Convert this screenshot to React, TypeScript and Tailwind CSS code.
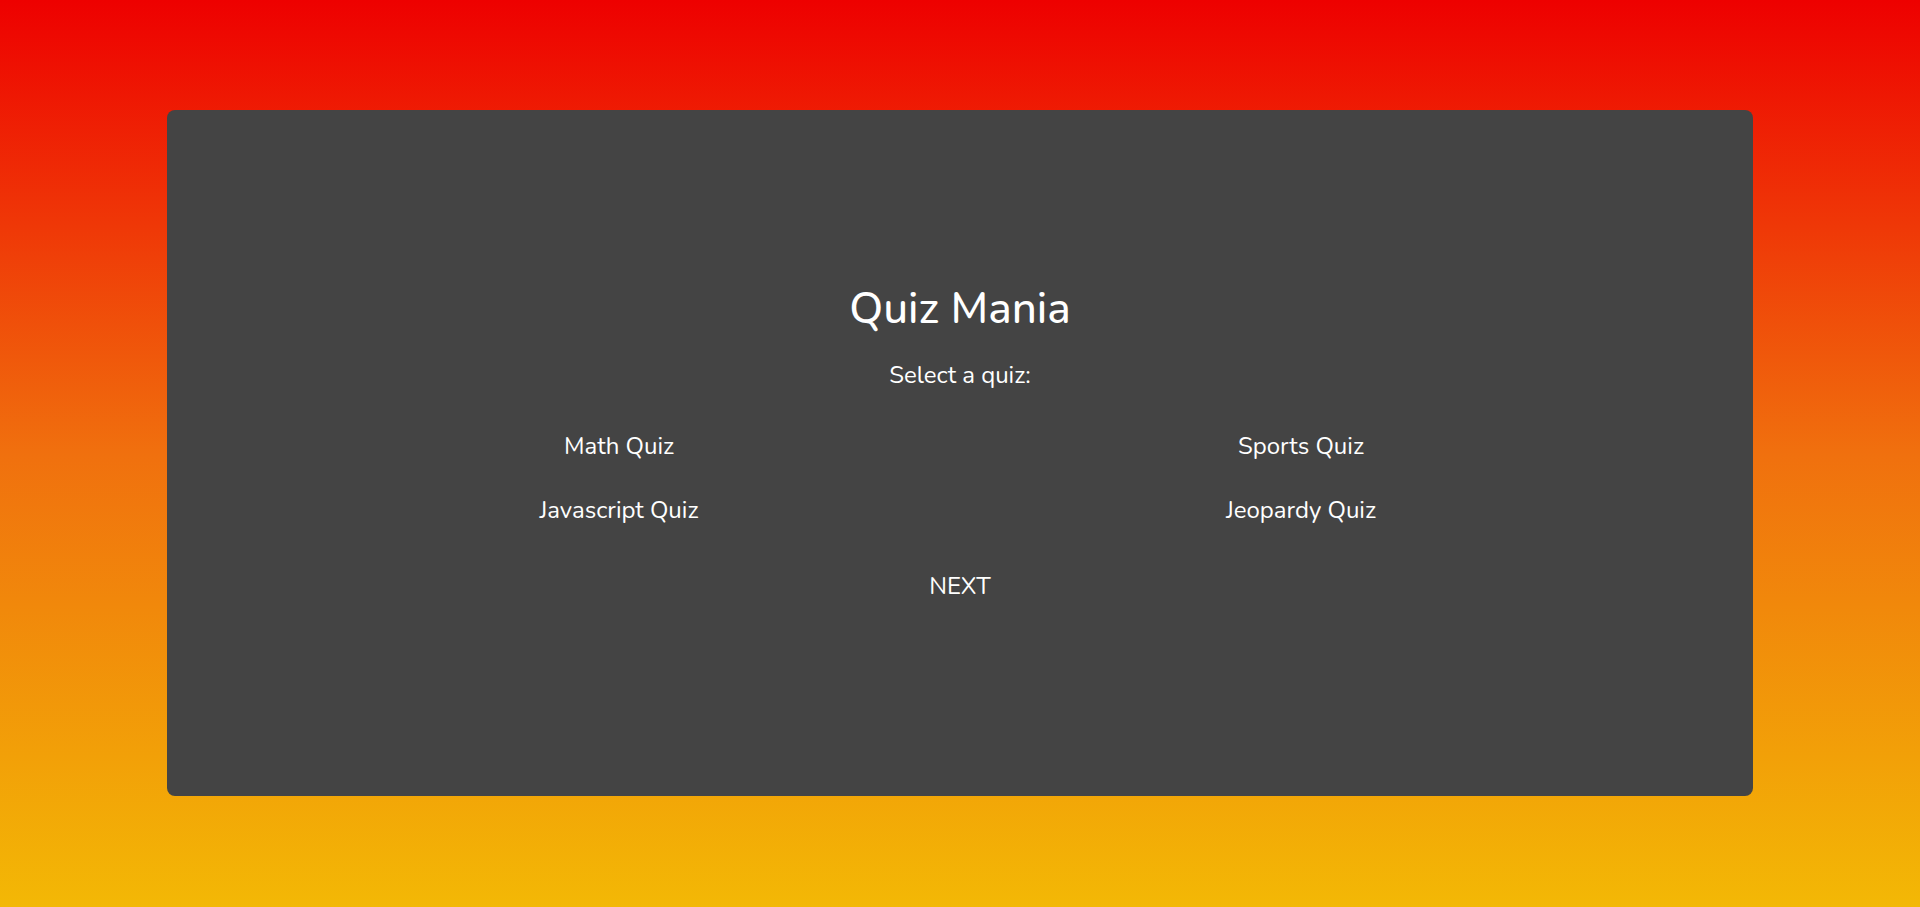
import { useState } from 'react';

const quizzes = ['Math Quiz', 'Sports Quiz', 'Javascript Quiz', 'Jeopardy Quiz'];

export default function App() {
  const [selected, setSelected] = useState<string | null>(null);

  return (
    <div
      className="min-h-screen w-full flex items-center justify-center bg-linear-to-b/srgb from-[#ee0000] via-[#f0700e] to-[#f3b805] pt-[110px] pb-[111px]"
      style={{ fontFamily: 'Nunito, Lato, "Open Sans", sans-serif' }}
    >
      {/* Quiz card */}
      <div className="w-[1586px] h-[686px] bg-[#444444] rounded-lg flex flex-col items-center justify-center text-white pb-[22px]">
        <h1 className="text-[44px] leading-none font-medium mb-[32px]">Quiz Mania</h1>
        <p className="text-[24px] leading-none mb-[47px]">Select a quiz:</p>

        <div className="grid grid-cols-2 w-[1364px] gap-y-[40px] mb-[52px]">
          {quizzes.map((q) => (
            <button
              key={q}
              onClick={() => setSelected(q)}
              className={`text-[24px] leading-none bg-transparent text-white ${selected === q ? 'underline' : ''}`}
            >
              {q}
            </button>
          ))}
        </div>

        <button className="text-[24px] leading-none text-white bg-transparent">NEXT</button>
      </div>
    </div>
  );
}
